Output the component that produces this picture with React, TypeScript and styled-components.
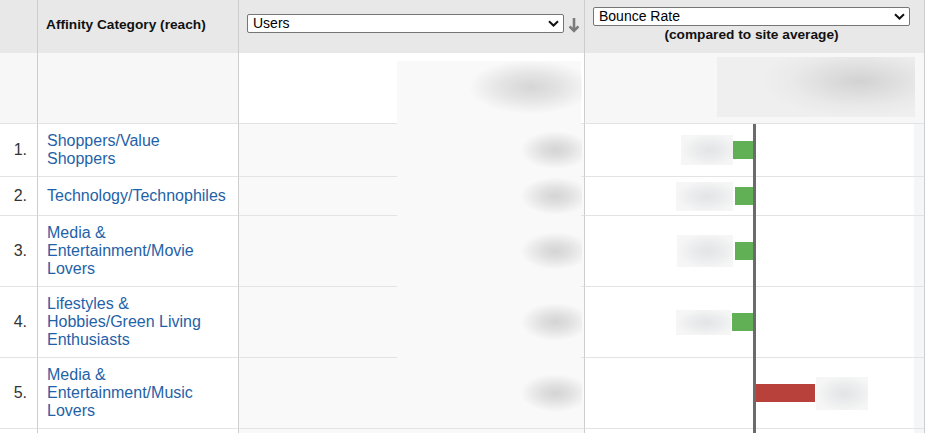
import React from 'react';
import styled, { createGlobalStyle } from 'styled-components';

const GlobalStyle = createGlobalStyle`
    body {
        margin: 0;
        background: #fff;
        font-family: "Liberation Sans", Arial, sans-serif;
    }
`;

interface IAffinityRow {
    name: string;
    bar: number;
    gap: number;
    labelW: number;
    labelH: number;
}

const rows: IAffinityRow[] = [
    { name: 'Shoppers/Value Shoppers', bar: -20, gap: 0, labelW: 52, labelH: 30 },
    { name: 'Technology/Technophiles', bar: -18, gap: 2, labelW: 57, labelH: 29 },
    { name: 'Media & Entertainment/Movie Lovers', bar: -18, gap: 2, labelW: 56, labelH: 32 },
    { name: 'Lifestyles & Hobbies/Green Living Enthusiasts', bar: -21, gap: 1, labelW: 55, labelH: 25 },
    { name: 'Media & Entertainment/Music Lovers', bar: 59, gap: 1, labelW: 52, labelH: 33 },
];

const Chevron = () => (
    <ChevronIcon width="11" height="7" viewBox="0 0 11 7">
        <path d="M1 1.2 L5.5 5.5 L10 1.2" fill="none" stroke="#111" strokeWidth="2" />
    </ChevronIcon>
);

const MetricSelect: React.FC<{ value: string }> = ({ value }) => (
    <SelectWrap>
        <Select defaultValue={value}>
            <option>{value}</option>
        </Select>
        <Chevron />
    </SelectWrap>
);

const App: React.FC = () => {
    return (
        <>
            <GlobalStyle />
            <Table>
                <HeaderRow>
                    <HeadCell />
                    <HeadCell>
                        <HeadTitle>Affinity Category (reach)</HeadTitle>
                    </HeadCell>
                    <HeadCell $pad="14px 4px 0 8px">
                        <MetricSelect value="Users" />
                        <SortArrow width="12" height="16" viewBox="0 0 12 16">
                            <path d="M6 1 V14 M1.6 9.4 L6 13.8 L10.4 9.4" fill="none" stroke="#7b7b7b" strokeWidth="2.6" />
                        </SortArrow>
                    </HeadCell>
                    <HeadCell $pad="7px 0 0 8px" $column>
                        <MetricSelect value="Bounce Rate" />
                        <Caption>(compared to site average)</Caption>
                    </HeadCell>
                </HeaderRow>

                <SummaryRow>
                    <SummaryCell $bg="#f7f7f7" />
                    <SummaryCell $bg="#f7f7f7" />
                    <SummaryCell $bg="#fff">
                        <SummaryBlob />
                    </SummaryCell>
                    <SummaryCell $bg="#f7f7f7">
                        <SummaryBlur />
                    </SummaryCell>
                </SummaryRow>

                {rows.map((row, i) => (
                    <Row key={row.name}>
                        <IndexCell>{i + 1}.</IndexCell>
                        <Cell>
                            <CategoryLink href="#">{row.name}</CategoryLink>
                        </Cell>
                        <ValueCell>
                            <ValueBlob />
                        </ValueCell>
                        <BarCell>
                            <BarSide $side="left">
                                {row.bar < 0 && (
                                    <>
                                        <BlurLabel style={{ width: row.labelW, height: row.labelH, marginRight: row.gap }} />
                                        <Bar $good style={{ width: -row.bar }} />
                                    </>
                                )}
                            </BarSide>
                            <AverageLine />
                            <BarSide $side="right">
                                {row.bar > 0 && (
                                    <>
                                        <Bar style={{ width: row.bar }} />
                                        <BlurLabel style={{ width: row.labelW, height: row.labelH, marginLeft: row.gap }} />
                                    </>
                                )}
                            </BarSide>
                            <EdgeStrip />
                        </BarCell>
                    </Row>
                ))}
                <Row>
                    <Cell $short />
                    <Cell $short />
                    <ValueCell $short />
                    <BarCell $short>
                        <BarSide $side="left" />
                        <AverageLine />
                        <BarSide $side="right" />
                        <EdgeStrip />
                    </BarCell>
                </Row>

                <Redaction />
            </Table>
        </>
    );
};

const Table = styled.div`
    position: relative;
    width: 925px;
    height: 433px;
    overflow: hidden;
    font-family: "Liberation Sans", Arial, sans-serif;
`;

const gridColumns = `38px 201px 346px 340px`;

const HeaderRow = styled.div`
    display: grid;
    grid-template-columns: ${gridColumns};
    height: 53px;
    background: #e8e8e8;
`;

const HeadCell = styled.div<{ $pad?: string; $column?: boolean }>`
    display: flex;
    flex-direction: ${p => (p.$column ? 'column' : 'row')};
    align-items: ${p => (p.$pad ? 'flex-start' : 'center')};
    padding: ${p => p.$pad || '0 0 5px 8px'};
    border-right: 1px solid #cdcdcd;
    box-sizing: border-box;
`;

const HeadTitle = styled.span`
    font-size: 13.7px;
    font-weight: bold;
    color: #111;
`;

const Caption = styled.div`
    width: 317px;
    margin-top: 1px;
    text-align: center;
    font-size: 13.7px;
    line-height: 15px;
    font-weight: bold;
    color: #111;
`;

const SelectWrap = styled.div`
    position: relative;
    width: 317px;
    height: 19px;
`;

const Select = styled.select`
    appearance: none;
    width: 100%;
    height: 19px;
    margin: 0;
    padding: 0 0 0 5px;
    border: 1px solid #767676;
    border-radius: 2px;
    background: #fff;
    font-family: "Liberation Sans", Arial, sans-serif;
    font-size: 14px;
    line-height: 17px;
    color: #000;
    box-sizing: border-box;
`;

const ChevronIcon = styled.svg`
    position: absolute;
    right: 5px;
    top: 6px;
    pointer-events: none;
`;

const SortArrow = styled.svg`
    margin: 3px 0 0 4px;
`;

const SummaryRow = styled.div`
    display: grid;
    grid-template-columns: ${gridColumns};
    height: 71px;
`;

const SummaryCell = styled.div<{ $bg: string }>`
    display: flex;
    align-items: flex-start;
    justify-content: flex-end;
    background: ${p => p.$bg};
    border-right: 1px solid #cdcdcd;
    border-bottom: 1px solid #e3e3e3;
    box-sizing: border-box;
`;

const Row = styled.div`
    display: grid;
    grid-template-columns: ${gridColumns};
`;

const Cell = styled.div<{ $short?: boolean }>`
    display: flex;
    align-items: center;
    min-height: ${p => (p.$short ? '12px' : '39px')};
    padding: 8px 6px 8px 9px;
    background: #fff;
    border-right: 1px solid #cdcdcd;
    border-bottom: 1px solid #e3e3e3;
    box-sizing: border-box;
`;

const IndexCell = styled(Cell)`
    justify-content: flex-end;
    padding: 0 10px 0 0;
    font-size: 16px;
    color: #333;
`;

const ValueCell = styled(Cell)`
    justify-content: flex-end;
    padding: 0 2px 0 0;
    background: #f9f9f9;
`;

const CategoryLink = styled.a`
    font-size: 16px;
    line-height: 18px;
    color: #1f62a7;
    text-decoration: none;
`;

const ValueBlob = styled.div`
    position: relative;
    z-index: 1;
    width: 70px;
    height: 38px;
    background: radial-gradient(ellipse 50% 50% at 62% 50%, #d4d4d4 0%, #e0e0e0 40%, rgba(249, 249, 249, 0) 100%);
`;

const SummaryBlob = styled.div`
    position: relative;
    z-index: 1;
    width: 150px;
    height: 54px;
    margin: 7px 2px 0 0;
    background: radial-gradient(ellipse 42% 50% at 66% 50%, #d6d6d6 0%, #e3e3e3 45%, rgba(249, 249, 249, 0) 100%);
`;

const SummaryBlur = styled.div`
    width: 198px;
    height: 60px;
    margin: 4px 9px 0 0;
    background: radial-gradient(ellipse 50% 62% at 72% 40%, #d2d2d2 0%, #dedede 35%, #eaeaea 70%, #efefef 100%);
`;

const Redaction = styled.div`
    position: absolute;
    left: 397px;
    top: 61px;
    width: 184px;
    height: 365px;
    background: #f9f9f9;
`;

const BarCell = styled.div<{ $short?: boolean }>`
    display: grid;
    grid-template-columns: 168px 3px 158px 10px;
    min-height: ${p => (p.$short ? '12px' : '39px')};
    background: #fff;
    border-right: 1px solid #cdcdcd;
    border-bottom: 1px solid #e3e3e3;
    box-sizing: border-box;
`;

const BarSide = styled.div<{ $side: 'left' | 'right' }>`
    display: flex;
    align-items: center;
    justify-content: ${p => (p.$side === 'left' ? 'flex-end' : 'flex-start')};
`;

const AverageLine = styled.div`
    background: #6b6b6b;
    margin-bottom: -1px;
`;

const EdgeStrip = styled.div`
    background: #f5f6f8;
`;

const Bar = styled.div<{ $good?: boolean }>`
    height: 18px;
    background: ${p => (p.$good ? '#62b055' : '#b8413c')};
`;

const BlurLabel = styled.div`
    background: radial-gradient(ellipse 55% 55% at 55% 50%, #e3e4e5 0%, #ebeced 50%, #f6f6f6 100%);
`;

export default App;
